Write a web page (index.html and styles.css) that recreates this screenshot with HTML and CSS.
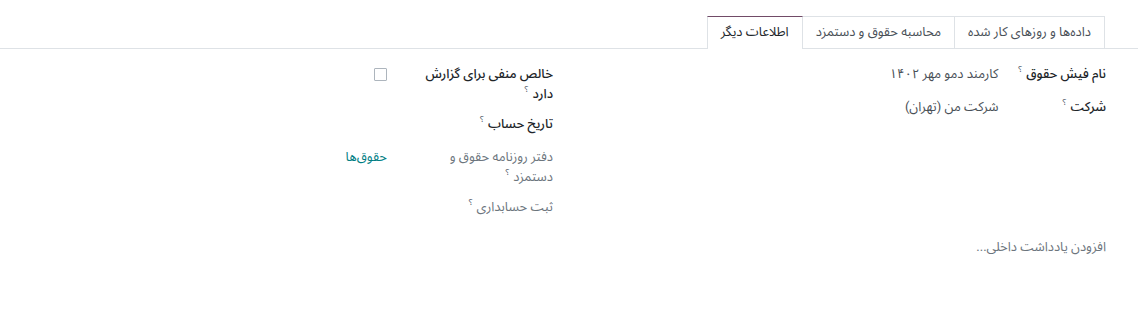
FILE: index.html
```html
<!DOCTYPE html>
<html lang="fa" dir="rtl">
<head>
<meta charset="utf-8">
<link rel="stylesheet" href="styles.css">
</head>
<body>
<div class="notebook">
  <ul class="tabs">
    <li class="tab">داده‌ها و روزهای کار شده</li>
    <li class="tab">محاسبه حقوق و دستمزد</li>
    <li class="tab active">اطلاعات دیگر</li>
  </ul>
</div>
<div class="sheet">
  <div class="columns">
    <div class="group">
      <div class="label strong">نام فیش حقوق<sup class="help">؟</sup></div>
      <div class="value">کارمند دمو مهر ۱۴۰۲</div>
      <div class="label strong">شرکت<sup class="help">؟</sup></div>
      <div class="value">شرکت من (تهران)</div>
    </div>
    <div class="group">
      <div class="label strong">خالص منفی برای گزارش دارد<sup class="help">؟</sup></div>
      <div class="value"><span class="checkbox"></span></div>
      <div class="label strong">تاریخ حساب<sup class="help">؟</sup></div>
      <div class="value"></div>
      <div class="label muted">دفتر روزنامه حقوق و دستمزد<sup class="help">؟</sup></div>
      <div class="value"><span class="link">حقوق‌ها</span></div>
      <div class="label muted">ثبت حسابداری<sup class="help">؟</sup></div>
      <div class="value"></div>
    </div>
  </div>
  <div class="note">افزودن یادداشت داخلی...</div>
</div>
</body>
</html>
```
FILE: styles.css
```css
html, body {
  margin: 0;
  padding: 0;
  background: #ffffff;
}
body {
  font-family: Roboto, "Noto Sans Arabic", "DejaVu Sans", sans-serif;
  font-size: 13px;
  line-height: 19.5px;
  color: #212529;
}
.notebook {
  padding-top: 16px;
}
.tabs {
  list-style: none;
  margin: 0;
  padding: 0 33px 0 0;
  display: flex;
  border-bottom: 1px solid #dee2e6;
  height: 32px;
}
.tab {
  height: 32px;
  box-sizing: border-box;
  padding: 5px 13px 0;
  border: 1px solid #dee2e6;
  border-bottom: none;
  color: #495057;
  background: #fff;
  margin-left: -1px;
}
.tab.active {
  border-color: #dee2e6;
  border-top-color: #714b67;
  color: #212529;
  height: 33px;
  position: relative;
  z-index: 1;
}
.sheet {
  padding: 15px 32px 0;
}
.columns {
  display: grid;
  grid-template-columns: 1fr 1fr;
  column-gap: 32px;
}
.group {
  display: grid;
  grid-template-columns: fit-content(166px) 1fr;
  row-gap: 11px;
  align-content: start;
}
.label {
  padding-left: 16px;
}
.label.strong {
  font-weight: 500;
  color: #212529;
}
.label.muted {
  color: #6c757d;
}
.value {
  min-height: 22px;
  color: #495057;
}
.help {
  font-size: 9px;
  color: #4b5563;
  font-weight: normal;
  line-height: 0;
  vertical-align: 6px;
  padding: 0 4px;
}
.checkbox {
  display: block;
  width: 11px;
  height: 11px;
  border: 1px solid #adb5bd;
  border-radius: 1px;
  margin-top: 4px;
}
.link {
  color: #017e84;
}
.note {
  margin-top: 18px;
  color: #6c757d;
}
```
